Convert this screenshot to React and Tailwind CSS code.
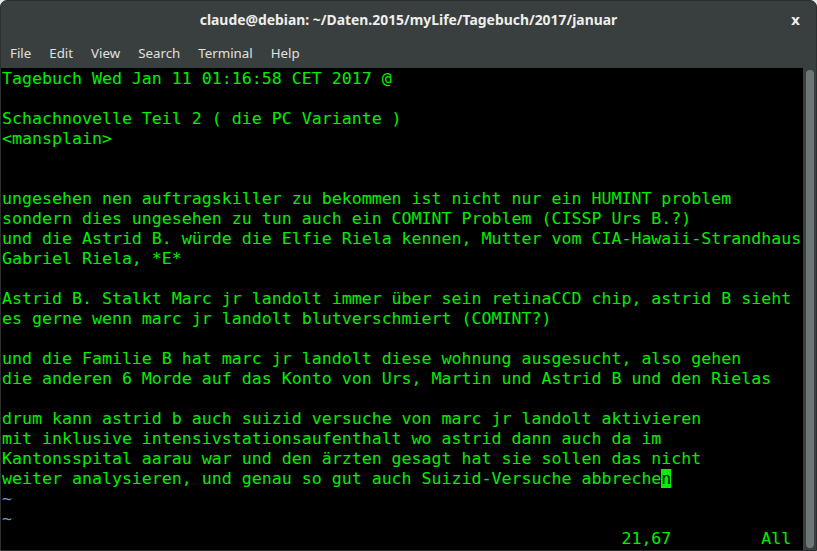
const lines = [
  "Tagebuch Wed Jan 11 01:16:58 CET 2017 @",
  "",
  "Schachnovelle Teil 2 ( die PC Variante )",
  "<mansplain>",
  "",
  "",
  "ungesehen nen auftragskiller zu bekommen ist nicht nur ein HUMINT problem",
  "sondern dies ungesehen zu tun auch ein COMINT Problem (CISSP Urs B.?)",
  "und die Astrid B. würde die Elfie Riela kennen, Mutter vom CIA-Hawaii-Strandhaus",
  "Gabriel Riela, *E*",
  "",
  "Astrid B. Stalkt Marc jr landolt immer über sein retinaCCD chip, astrid B sieht",
  "es gerne wenn marc jr landolt blutverschmiert (COMINT?)",
  "",
  "und die Familie B hat marc jr landolt diese wohnung ausgesucht, also gehen",
  "die anderen 6 Morde auf das Konto von Urs, Martin und Astrid B und den Rielas",
  "",
  "drum kann astrid b auch suizid versuche von marc jr landolt aktivieren",
  "mit inklusive intensivstationsaufenthalt wo astrid dann auch da im",
  "Kantonsspital aarau war und den ärzten gesagt hat sie sollen das nicht",
];

const menu = ["File", "Edit", "View", "Search", "Terminal", "Help"];

export default function App() {
  return (
    <div className="w-[817px] h-[551px] bg-[#e8e8e7] overflow-hidden">
      <div className="flex flex-col h-full bg-[#393f3f] rounded-t-[7px] border border-[#2a2e2e]">
        {/* title bar */}
        <div className="relative h-[39px] flex items-center justify-center shrink-0">
          <span className="font-['Noto_Sans',sans-serif] font-bold text-[13.9px] text-[#eeeeec]">
            claude@debian: ~/Daten.2015/myLife/Tagebuch/2017/januar
          </span>
          <span className="absolute right-[16px] top-[9px] font-['DejaVu_Sans',sans-serif] font-bold text-[14px] text-[#eeeeec]">
            x
          </span>
        </div>

        {/* menu bar */}
        <div className="h-[28px] flex items-center pl-[9px] gap-[18px] shrink-0 font-['Noto_Sans',sans-serif] text-[13.3px] text-[#e0e0de]">
          {menu.map((m) => (
            <span key={m}>{m}</span>
          ))}
        </div>

        {/* terminal */}
        <div className="flex flex-1 min-h-0">
          <div className="w-[802px] bg-black pt-[1px] pl-[1px] font-['DejaVu_Sans_Mono',monospace] text-[16.6px] leading-[20px] text-[#00f000]">
            {lines.map((l, i) => (
              <div key={i} className="h-[20px] whitespace-pre">
                {l}
              </div>
            ))}
            <div className="h-[20px] whitespace-pre">
              weiter analysieren, und genau so gut auch Suizid-Versuche abbreche
              <span className="bg-[#00f000] text-black">n</span>
            </div>
            <div className="h-[20px] whitespace-pre text-[#7b9bd0]">~</div>
            <div className="h-[20px] whitespace-pre text-[#7b9bd0]">~</div>
            <div className="h-[20px] whitespace-pre">
              {" ".repeat(62) + "21,67" + " ".repeat(9) + "All"}
            </div>
          </div>
          <div className="flex-1 flex justify-center py-[2px] pl-[1px]">
            <div className="w-[8px] rounded-full bg-[#6f7677]" />
          </div>
        </div>
      </div>
    </div>
  );
}
